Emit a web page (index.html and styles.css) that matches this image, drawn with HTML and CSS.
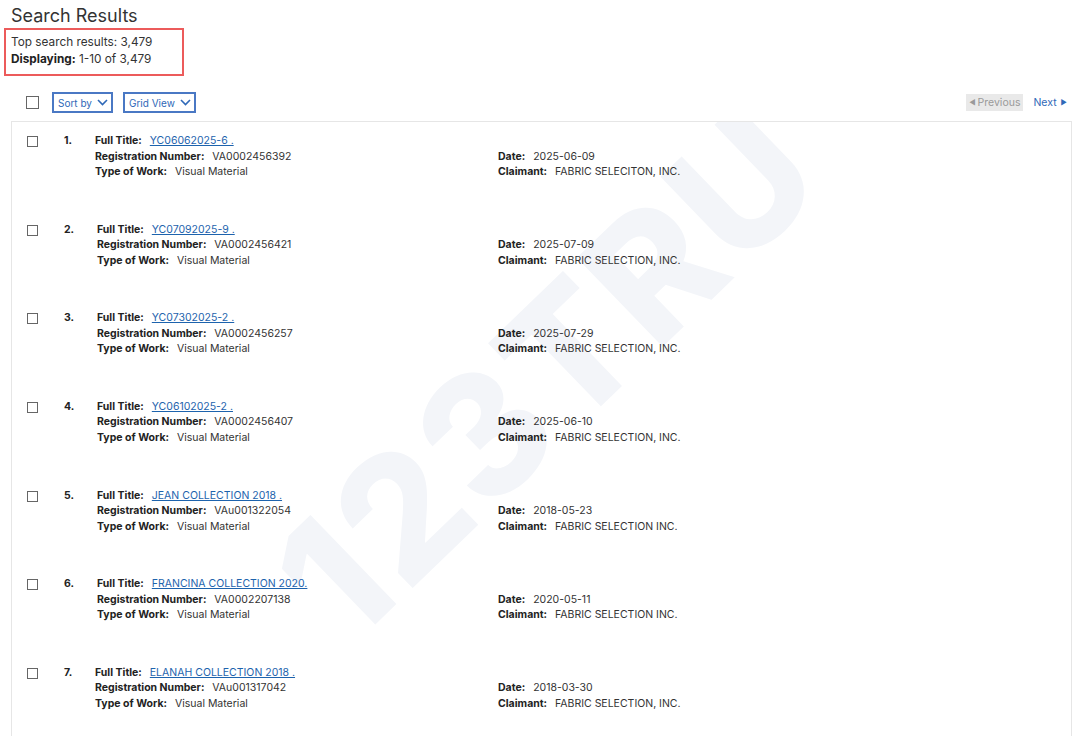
FILE: index.html
```html
<!DOCTYPE html>
<html lang="en">
<head>
    <meta charset="UTF-8">
    <meta name="viewport" content="width=device-width, initial-scale=1.0">
    <title>Search Results</title>
    <link rel="stylesheet" href="styles.css">
</head>
<body>
    <div class="page">
        <h1 class="page-title">Search Results</h1>

        <div class="summary">
            <div>Top search results: 3,479</div>
            <div><b>Displaying:</b> 1-10 of 3,479</div>
        </div>

        <div class="toolbar">
            <div class="toolbar-left">
                <span class="check check-lg"></span>
                <button class="select-button">Sort by
                    <svg width="11" height="7" viewBox="0 0 11 7"><path d="M1 1l4.5 4.5L10 1" fill="none" stroke="#2f69b8" stroke-width="1.6"/></svg>
                </button>
                <button class="select-button">Grid View
                    <svg width="11" height="7" viewBox="0 0 11 7"><path d="M1 1l4.5 4.5L10 1" fill="none" stroke="#2f69b8" stroke-width="1.6"/></svg>
                </button>
            </div>
            <div class="pager">
                <span class="pager-prev"><span class="tri">&#9664;</span>Previous</span>
                <a class="pager-next" href="#">Next <span class="tri">&#9654;</span></a>
            </div>
        </div>

        <div class="results">
            <div class="watermark" aria-hidden="true">123TRU</div>

            <div class="result">
                <span class="check"></span>
                <span class="num">1.</span>
                <div class="fields">
                    <div><b>Full Title:</b> <a href="#">YC06062025-6 .</a></div>
                    <div><b>Registration Number:</b> VA0002456392</div>
                    <div><b>Type of Work:</b> Visual Material</div>
                </div>
                <div class="fields side">
                    <div><b>Date:</b> 2025-06-09</div>
                    <div><b>Claimant:</b> FABRIC SELECITON, INC.</div>
                </div>
            </div>

            <div class="result shifted">
                <span class="check"></span>
                <span class="num">2.</span>
                <div class="fields">
                    <div><b>Full Title:</b> <a href="#">YC07092025-9 .</a></div>
                    <div><b>Registration Number:</b> VA0002456421</div>
                    <div><b>Type of Work:</b> Visual Material</div>
                </div>
                <div class="fields side">
                    <div><b>Date:</b> 2025-07-09</div>
                    <div><b>Claimant:</b> FABRIC SELECTION, INC.</div>
                </div>
            </div>

            <div class="result shifted">
                <span class="check"></span>
                <span class="num">3.</span>
                <div class="fields">
                    <div><b>Full Title:</b> <a href="#">YC07302025-2 .</a></div>
                    <div><b>Registration Number:</b> VA0002456257</div>
                    <div><b>Type of Work:</b> Visual Material</div>
                </div>
                <div class="fields side">
                    <div><b>Date:</b> 2025-07-29</div>
                    <div><b>Claimant:</b> FABRIC SELECTION, INC.</div>
                </div>
            </div>

            <div class="result shifted">
                <span class="check"></span>
                <span class="num">4.</span>
                <div class="fields">
                    <div><b>Full Title:</b> <a href="#">YC06102025-2 .</a></div>
                    <div><b>Registration Number:</b> VA0002456407</div>
                    <div><b>Type of Work:</b> Visual Material</div>
                </div>
                <div class="fields side">
                    <div><b>Date:</b> 2025-06-10</div>
                    <div><b>Claimant:</b> FABRIC SELECTION, INC.</div>
                </div>
            </div>

            <div class="result shifted">
                <span class="check"></span>
                <span class="num">5.</span>
                <div class="fields">
                    <div><b>Full Title:</b> <a href="#">JEAN COLLECTION 2018 .</a></div>
                    <div><b>Registration Number:</b> VAu001322054</div>
                    <div><b>Type of Work:</b> Visual Material</div>
                </div>
                <div class="fields side">
                    <div><b>Date:</b> 2018-05-23</div>
                    <div><b>Claimant:</b> FABRIC SELECTION INC.</div>
                </div>
            </div>

            <div class="result shifted">
                <span class="check"></span>
                <span class="num">6.</span>
                <div class="fields">
                    <div><b>Full Title:</b> <a href="#">FRANCINA COLLECTION 2020.</a></div>
                    <div><b>Registration Number:</b> VA0002207138</div>
                    <div><b>Type of Work:</b> Visual Material</div>
                </div>
                <div class="fields side">
                    <div><b>Date:</b> 2020-05-11</div>
                    <div><b>Claimant:</b> FABRIC SELECTION INC.</div>
                </div>
            </div>

            <div class="result">
                <span class="check"></span>
                <span class="num">7.</span>
                <div class="fields">
                    <div><b>Full Title:</b> <a href="#">ELANAH COLLECTION 2018 .</a></div>
                    <div><b>Registration Number:</b> VAu001317042</div>
                    <div><b>Type of Work:</b> Visual Material</div>
                </div>
                <div class="fields side">
                    <div><b>Date:</b> 2018-03-30</div>
                    <div><b>Claimant:</b> FABRIC SELECTION, INC.</div>
                </div>
            </div>
        </div>
    </div>
</body>
</html>
```

FILE: styles.css
```css
body {
    margin: 0;
    font-family: Inter, "Liberation Sans", sans-serif;
    color: #333;
    background-color: white;
    overflow: hidden;
}
.page {
    padding: 5px 8px 0 11px;
}
.page-title {
    margin: 0;
    font-size: 18px;
    font-weight: 400;
    line-height: 22px;
    color: #333;
}
.summary {
    display: inline-block;
    margin: 1px 0 0 -7px;
    padding: 4px 30px 6px 5px;
    border: 2px solid #ec5b5b;
    font-size: 11.8px;
    line-height: 17px;
    color: #333;
}
.summary b {
    color: #222;
}
.toolbar {
    display: flex;
    justify-content: space-between;
    align-items: center;
    margin-top: 16px;
}
.toolbar-left {
    display: flex;
    align-items: center;
    gap: 10px;
    padding-left: 15px;
}
.check {
    display: inline-block;
    width: 9px;
    height: 9px;
    border: 1px solid #666;
    background-color: white;
}
.check-lg {
    width: 11px;
    height: 11px;
    margin-right: 3px;
}
.select-button {
    display: flex;
    align-items: center;
    gap: 5px;
    height: 21px;
    padding: 0 3px 0 4px;
    border: 2px solid #4a78c4;
    background-color: white;
    color: #2f69b8;
    font-family: inherit;
    font-size: 10px;
}
.pager {
    display: flex;
    align-items: center;
    gap: 10px;
    padding-right: 5px;
    font-size: 10.5px;
}
.pager-prev {
    padding: 2px 3px;
    background-color: #e9e9e9;
    color: #9a9a9a;
}
.pager-next {
    color: #2f69b8;
    text-decoration: none;
}
.tri {
    font-size: 7px;
    vertical-align: 1px;
    margin-right: 2px;
}
.pager-next .tri {
    margin: 0 0 0 1px;
}
.results {
    position: relative;
    margin-top: 8px;
    height: 620px;
    border: 1px solid #e6e6e6;
    padding: 11px 0 0 15px;
    overflow: hidden;
}
.watermark {
    position: absolute;
    left: 200px;
    top: 165px;
    transform: rotate(-44deg);
    font-size: 170px;
    font-weight: 800;
    line-height: 1;
    color: #f3f5f9;
    letter-spacing: 4px;
    white-space: nowrap;
    pointer-events: none;
}
.result {
    position: relative;
    display: grid;
    grid-template-columns: 37px 31px 403px 1fr;
    align-items: start;
    height: 88.67px;
    font-size: 10.5px;
    line-height: 15.5px;
    color: #333;
}
.result.shifted {
    grid-template-columns: 37px 33px 401px 1fr;
}
.result .check {
    margin-top: 3px;
}
.num {
    font-weight: 700;
    color: #222;
}
.fields b {
    margin-right: 5px;
    color: #222;
}
.fields a {
    color: #1d63ad;
}
.side {
    padding-top: 15.5px;
}
```
